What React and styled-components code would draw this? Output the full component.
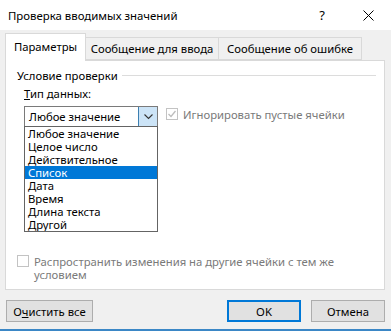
import React from "react";
import styled, { createGlobalStyle } from "styled-components";

const Global = createGlobalStyle`
  html, body { margin: 0; padding: 0; background: #f0f0f0; }
  body { font-family: "Segoe UI", "Noto Sans", sans-serif; font-size: 11.3px; color: #000; }
`;

const Dialog = styled.div`
  width: 391px;
  height: 331px;
  display: flex;
  flex-direction: column;
  background: #f0f0f0;
  box-sizing: border-box;
  border-bottom: 2px solid #3b87c6;
  overflow: hidden;
`;

const TitleBar = styled.div`
  height: 30px;
  flex: none;
  background: #fff;
  display: flex;
  align-items: center;
  padding-left: 8px;
`;

const Title = styled.div`
  flex: 1;
  font-size: 11.4px;
  color: #000;
`;

const TitleButton = styled.div`
  width: 46px;
  height: 30px;
  display: flex;
  align-items: center;
  justify-content: center;
  font-size: 13px;
  color: #000;
`;

const Body = styled.div`
  flex: 1;
  display: flex;
  flex-direction: column;
  padding: 3px 6px 0 5px;
`;

const TabList = styled.div`
  display: flex;
  align-items: flex-end;
  height: 27px;
  position: relative;
  z-index: 1;
`;

const Tab = styled.div`
  box-sizing: border-box;
  width: ${(p) => p.$w}px;
  height: ${(p) => (p.$active ? 28 : 23)}px;
  margin-bottom: ${(p) => (p.$active ? -1 : 0)}px;
  border: 1px solid #d9d9d9;
  border-bottom: ${(p) => (p.$active ? "none" : "1px solid #d9d9d9")};
  margin-left: ${(p) => (p.$first ? 0 : -1)}px;
  background: ${(p) => (p.$active ? "#fff" : "#f0f0f0")};
  display: flex;
  align-items: center;
  justify-content: center;
  padding-bottom: ${(p) => (p.$active ? 3 : 0)}px;
  white-space: nowrap;
`;

const Panel = styled.div`
  box-sizing: border-box;
  height: 230px;
  width: 380px;
  background: #fff;
  border: 1px solid #d9d9d9;
  display: flex;
  flex-direction: column;
  padding: 6px 8px 0 11px;
`;

const GroupHeader = styled.div`
  display: flex;
  align-items: center;
  gap: 4px;
  height: 16px;
  &::after {
    content: "";
    flex: 1;
    height: 1px;
    background: #dcdcdc;
    margin-top: 1px;
  }
`;

const GroupContent = styled.div`
  padding-left: 7px;
  display: flex;
  flex-direction: column;
`;

const FieldLabel = styled.div`
  margin-top: 3px;
  height: 16px;
  line-height: 16px;
`;

const Access = styled.span`
  text-decoration: underline;
`;

const Row = styled.div`
  display: flex;
  align-items: flex-start;
  margin-top: 4px;
`;

const ComboWrap = styled.div`
  position: relative;
  width: 134px;
`;

const Combo = styled.div`
  box-sizing: border-box;
  height: 21px;
  border: 1px solid #7a7a7a;
  display: flex;
  align-items: center;
  padding-left: 4px;
`;

const ComboText = styled.div`
  flex: 1;
`;

const DropButton = styled.div`
  box-sizing: border-box;
  width: 19px;
  height: 19px;
  background: #cce4f7;
  border-left: 1px solid #3c7fb1;
  display: flex;
  align-items: center;
  justify-content: center;
`;

const List = styled.div`
  position: absolute;
  top: 20px;
  left: 0;
  width: 134px;
  box-sizing: border-box;
  border: 1px solid #646464;
  background: #fff;
`;

const Item = styled.div`
  height: 13px;
  line-height: 13px;
  padding-left: 3px;
  overflow: hidden;
  background: ${(p) => (p.$selected ? "#0078d7" : "transparent")};
  color: ${(p) => (p.$selected ? "#fff" : "#000")};
`;

const CheckRow = styled.div`
  display: flex;
  align-items: flex-start;
  gap: 5px;
  color: ${(p) => (p.$disabled ? "#7a7a7a" : "#000")};
  margin-left: ${(p) => p.$ml || 0}px;
  margin-top: ${(p) => p.$mt || 0}px;
  margin-bottom: ${(p) => p.$mb || 0}px;
  width: ${(p) => (p.$w ? `${p.$w}px` : "auto")};
  line-height: 13px;
`;

const Box = styled.div`
  flex: none;
  box-sizing: border-box;
  width: 12px;
  height: 12px;
  border: 1px solid #c3c3c3;
  background: #fff;
  display: flex;
  align-items: center;
  justify-content: center;
`;

const Spacer = styled.div`
  flex: 1;
`;

const Footer = styled.div`
  display: flex;
  align-items: center;
  margin-top: 10px;
  padding-left: 1px;
  gap: 10px;
`;

const Button = styled.div`
  box-sizing: border-box;
  width: ${(p) => p.$w}px;
  height: 22px;
  background: #e1e1e1;
  border: ${(p) => (p.$default ? "2px solid #0078d7" : "1px solid #adadad")};
  display: flex;
  align-items: center;
  justify-content: center;
  margin-left: ${(p) => (p.$push ? "auto" : "0")};
`;

const items = [
  "Любое значение",
  "Целое число",
  "Действительное",
  "Список",
  "Дата",
  "Время",
  "Длина текста",
  "Другой",
];

export default function App() {
  return (
    <>
      <Global />
      <Dialog>
        <TitleBar>
          <Title>Проверка вводимых значений</Title>
          <TitleButton>?</TitleButton>
          <TitleButton>
            <svg width="11" height="11" viewBox="0 0 11 11">
              <path d="M0.5 0.5 L10.5 10.5 M10.5 0.5 L0.5 10.5" stroke="#000" strokeWidth="1" fill="none" />
            </svg>
          </TitleButton>
        </TitleBar>
        <Body>
          <TabList>
            <Tab $active $first $w={81}>Параметры</Tab>
            <Tab $w={134}>Сообщение для ввода</Tab>
            <Tab $w={144}>Сообщение об ошибке</Tab>
          </TabList>
          <Panel>
            <GroupHeader>Условие проверки</GroupHeader>
            <GroupContent>
              <FieldLabel>
                <Access>Т</Access>ип данных:
              </FieldLabel>
              <Row>
                <ComboWrap>
                  <Combo>
                    <ComboText>Любое значение</ComboText>
                    <DropButton>
                      <svg width="9" height="6" viewBox="0 0 9 6">
                        <path d="M0.5 0.5 L4.5 4.5 L8.5 0.5" stroke="#333" strokeWidth="1.1" fill="none" />
                      </svg>
                    </DropButton>
                  </Combo>
                  <List>
                    {items.map((t) => (
                      <Item key={t} $selected={t === "Список"}>{t}</Item>
                    ))}
                  </List>
                </ComboWrap>
                <CheckRow $disabled $ml={8} $mt={2}>
                  <Box>
                    <svg width="10" height="10" viewBox="0 0 10 10">
                      <path d="M1.5 5 L4 7.5 L8.5 2" stroke="#bdbdbd" strokeWidth="1.3" fill="none" />
                    </svg>
                  </Box>
                  <span>Игнорировать пустые ячейки</span>
                </CheckRow>
              </Row>
            </GroupContent>
            <Spacer />
            <CheckRow $disabled $mb={8} $w={332}>
              <Box />
              <span>Распространить изменения на другие ячейки с тем же условием</span>
            </CheckRow>
          </Panel>
          <Footer>
            <Button $w={87}>
              <span>О<Access>ч</Access>истить все</span>
            </Button>
            <Button $w={74} $default $push>OK</Button>
            <Button $w={74}>Отмена</Button>
          </Footer>
        </Body>
      </Dialog>
    </>
  );
}
